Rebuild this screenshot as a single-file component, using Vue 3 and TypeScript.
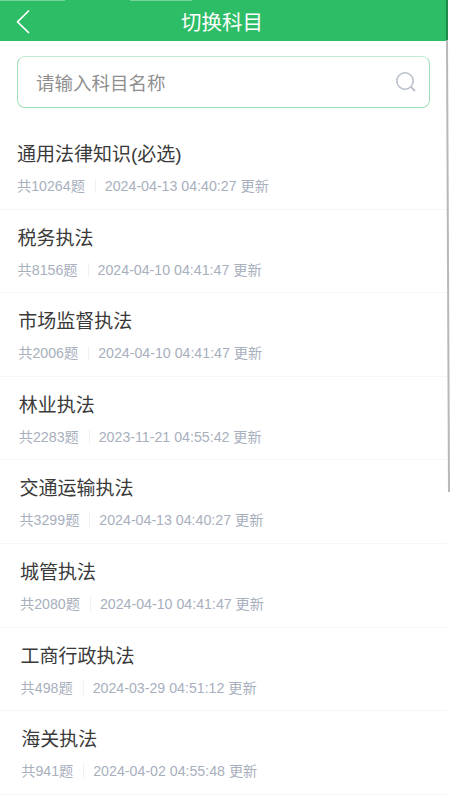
<script setup lang="ts">
interface Subject {
  name: string
  count: number
  time: string
}

const subjects: Subject[] = [
  { name: '通用法律知识(必选)', count: 10264, time: '2024-04-13 04:40:27' },
  { name: '税务执法', count: 8156, time: '2024-04-10 04:41:47' },
  { name: '市场监督执法', count: 2006, time: '2024-04-10 04:41:47' },
  { name: '林业执法', count: 2283, time: '2023-11-21 04:55:42' },
  { name: '交通运输执法', count: 3299, time: '2024-04-13 04:40:27' },
  { name: '城管执法', count: 2080, time: '2024-04-10 04:41:47' },
  { name: '工商行政执法', count: 498, time: '2024-03-29 04:51:12' },
  { name: '海关执法', count: 941, time: '2024-04-02 04:55:48' },
]

// The reference is very slightly skewed: rows drift right on the way down.
const rowIndent = (i: number) => `${17 + i * 0.6}px`
</script>

<template>
  <div class="page">
    <div class="content">
      <header class="bar">
        <svg class="back" width="16" height="26" viewBox="0 0 16 26" fill="none">
          <path d="M13.5 2 L2.5 12.8 L13.5 23.5" stroke="#fff" stroke-width="1.7" stroke-linecap="round" stroke-linejoin="round" />
        </svg>
        <h1 class="title">切换科目</h1>
      </header>

      <div class="search">
        <span class="placeholder">请输入科目名称</span>
        <svg class="lens" width="22" height="22" viewBox="0 0 22 22" fill="none">
          <circle cx="10" cy="10" r="8.2" stroke="#b9bfcb" stroke-width="1.6" />
          <path d="M16 16 L19.5 19.5" stroke="#b9bfcb" stroke-width="1.8" stroke-linecap="round" />
        </svg>
      </div>

      <ul class="list">
        <li v-for="(s, i) in subjects" :key="s.name" class="row" :style="{ paddingLeft: rowIndent(i) }">
          <div class="name">{{ s.name }}</div>
          <div class="meta">
            <span>共{{ s.count }}题</span>
            <i class="sep"></i>
            <span>{{ s.time }} 更新</span>
          </div>
        </li>
      </ul>
    </div>

    <!-- the thin shadow edge and top glints that lie over the page -->
    <svg class="edge" width="450" height="800" viewBox="0 0 450 800" fill="none">
      <path d="M0 0.5 H65 M130 0.5 H192" stroke="#74d29a" stroke-width="1" />
      <path d="M447 0 V40" stroke="#1f8a4a" stroke-width="2" />
      <path d="M447 40 L449 492" stroke="#b8b8b8" stroke-width="2" />
    </svg>
  </div>
</template>

<style>
html, body { margin: 0; background: #fff; }
</style>

<style scoped>
.page {
  position: relative;
  width: 450px;
  height: 800px;
  overflow: hidden;
  background: #fff;
  font-family: "Liberation Sans", "Noto Sans CJK SC", sans-serif;
}
.content {
  width: 447px;
}
.edge {
  position: absolute;
  left: 0;
  top: 0;
  pointer-events: none;
}
.bar {
  height: 41px;
  background: #2dbd66;
  display: flex;
  align-items: center;
  justify-content: center;
  position: relative;
}
.back {
  position: absolute;
  left: 15px;
  top: 9px;
}
.title {
  margin: 0 3px 0 0;
  font-size: 20.5px;
  font-weight: 400;
  color: #fff;
}
.search {
  margin: 15px 17px 0 17px;
  height: 52px;
  box-sizing: border-box;
  border: 1px solid #a0e0b9;
  border-top-color: #c4ecd4;
  border-radius: 8px;
  display: flex;
  align-items: center;
  justify-content: space-between;
  padding: 0 12px 0 18px;
}
.placeholder {
  font-size: 18.5px;
  color: #8f8f8f;
}
.list {
  list-style: none;
  margin: 18px 0 0;
  padding: 0;
}
.row {
  height: 83.6px;
  box-sizing: border-box;
  border-bottom: 1px solid #f6f6f6;
  padding-top: 15px;
}
.name {
  font-size: 19px;
  line-height: 28px;
  color: #3a3a3a;
}
.meta {
  margin-top: 7px;
  display: flex;
  align-items: center;
  font-size: 14.2px;
  line-height: 20px;
  color: #a8afbd;
}
.sep {
  width: 1px;
  height: 14px;
  background: #f0f0f0;
  margin: 0 9px 0 10px;
}
</style>
